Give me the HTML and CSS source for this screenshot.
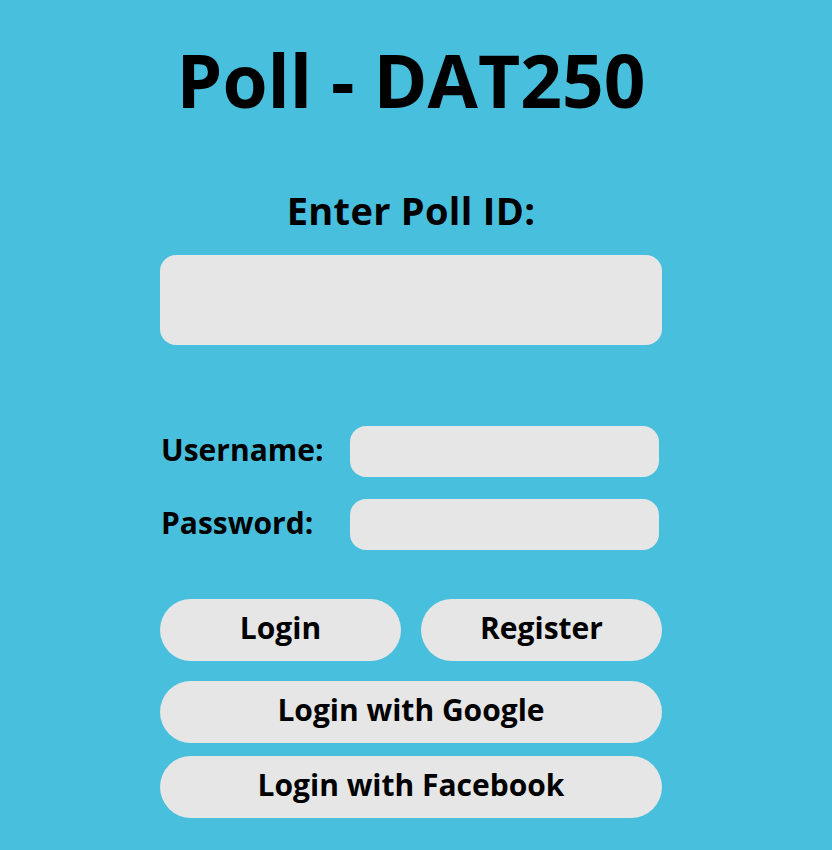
FILE: index.html
```html
<!DOCTYPE html>
<html>
<head>
<meta charset="utf-8">
<link rel="stylesheet" href="styles.css">
</head>
<body>
<main class="page">
  <h1 class="title">Poll - DAT250</h1>
  <section class="poll">
    <label class="poll-label">Enter Poll ID:</label>
    <input class="poll-input" type="text">
  </section>
  <section class="creds">
    <div class="row">
      <label class="field-label">Username:</label>
      <input class="field-input" type="text">
    </div>
    <div class="row">
      <label class="field-label">Password:</label>
      <input class="field-input" type="password">
    </div>
  </section>
  <section class="actions">
    <div class="pair">
      <button class="btn">Login</button>
      <button class="btn">Register</button>
    </div>
    <button class="btn wide g">Login with Google</button>
    <button class="btn wide">Login with Facebook</button>
  </section>
</main>
</body>
</html>
```
FILE: styles.css
```css
html, body {
  margin: 0;
  padding: 0;
  background: #48bfdc;
}
body {
  font-family: "Open Sans", sans-serif;
  color: #000;
}
.page {
  width: 502px;
  margin-left: 160px;
  display: flex;
  flex-direction: column;
}
.title {
  margin: 36px 0 0;
  font-size: 73px;
  font-weight: 700;
  text-align: center;
  line-height: 88px;
}
.poll {
  display: flex;
  flex-direction: column;
  align-items: center;
  margin-top: 63px;
}
.poll-label {
  font-size: 38px;
  font-weight: 700;
  line-height: 46px;
  letter-spacing: 0.3px;
}
.poll-input {
  margin-top: 22px;
  width: 502px;
  height: 90px;
  box-sizing: border-box;
  border: none;
  border-radius: 16px;
  background: #e6e6e6;
}
.creds {
  margin-top: 81px;
  display: flex;
  flex-direction: column;
  gap: 22px;
}
.row {
  display: flex;
  align-items: center;
}
.field-label {
  width: 189px;
  padding-left: 1px;
  padding-bottom: 4px;
  font-size: 30px;
  font-weight: 700;
}
.field-input {
  width: 309px;
  height: 51px;
  box-sizing: border-box;
  border: none;
  border-radius: 16px;
  background: #e6e6e6;
}
.actions {
  margin-top: 49px;
  display: flex;
  flex-direction: column;
  gap: 20px;
}
.pair {
  display: flex;
  gap: 20px;
}
.btn {
  flex: 1;
  height: 62px;
  border: none;
  border-radius: 31px;
  background: #e6e6e6;
  font-family: "Open Sans", sans-serif;
  font-size: 30px;
  font-weight: 700;
  color: #000;
  padding: 0 0 5px;
}
.wide {
  flex: none;
  width: 502px;
}
.wide.g + .wide {
  margin-top: -7px;
}
```
